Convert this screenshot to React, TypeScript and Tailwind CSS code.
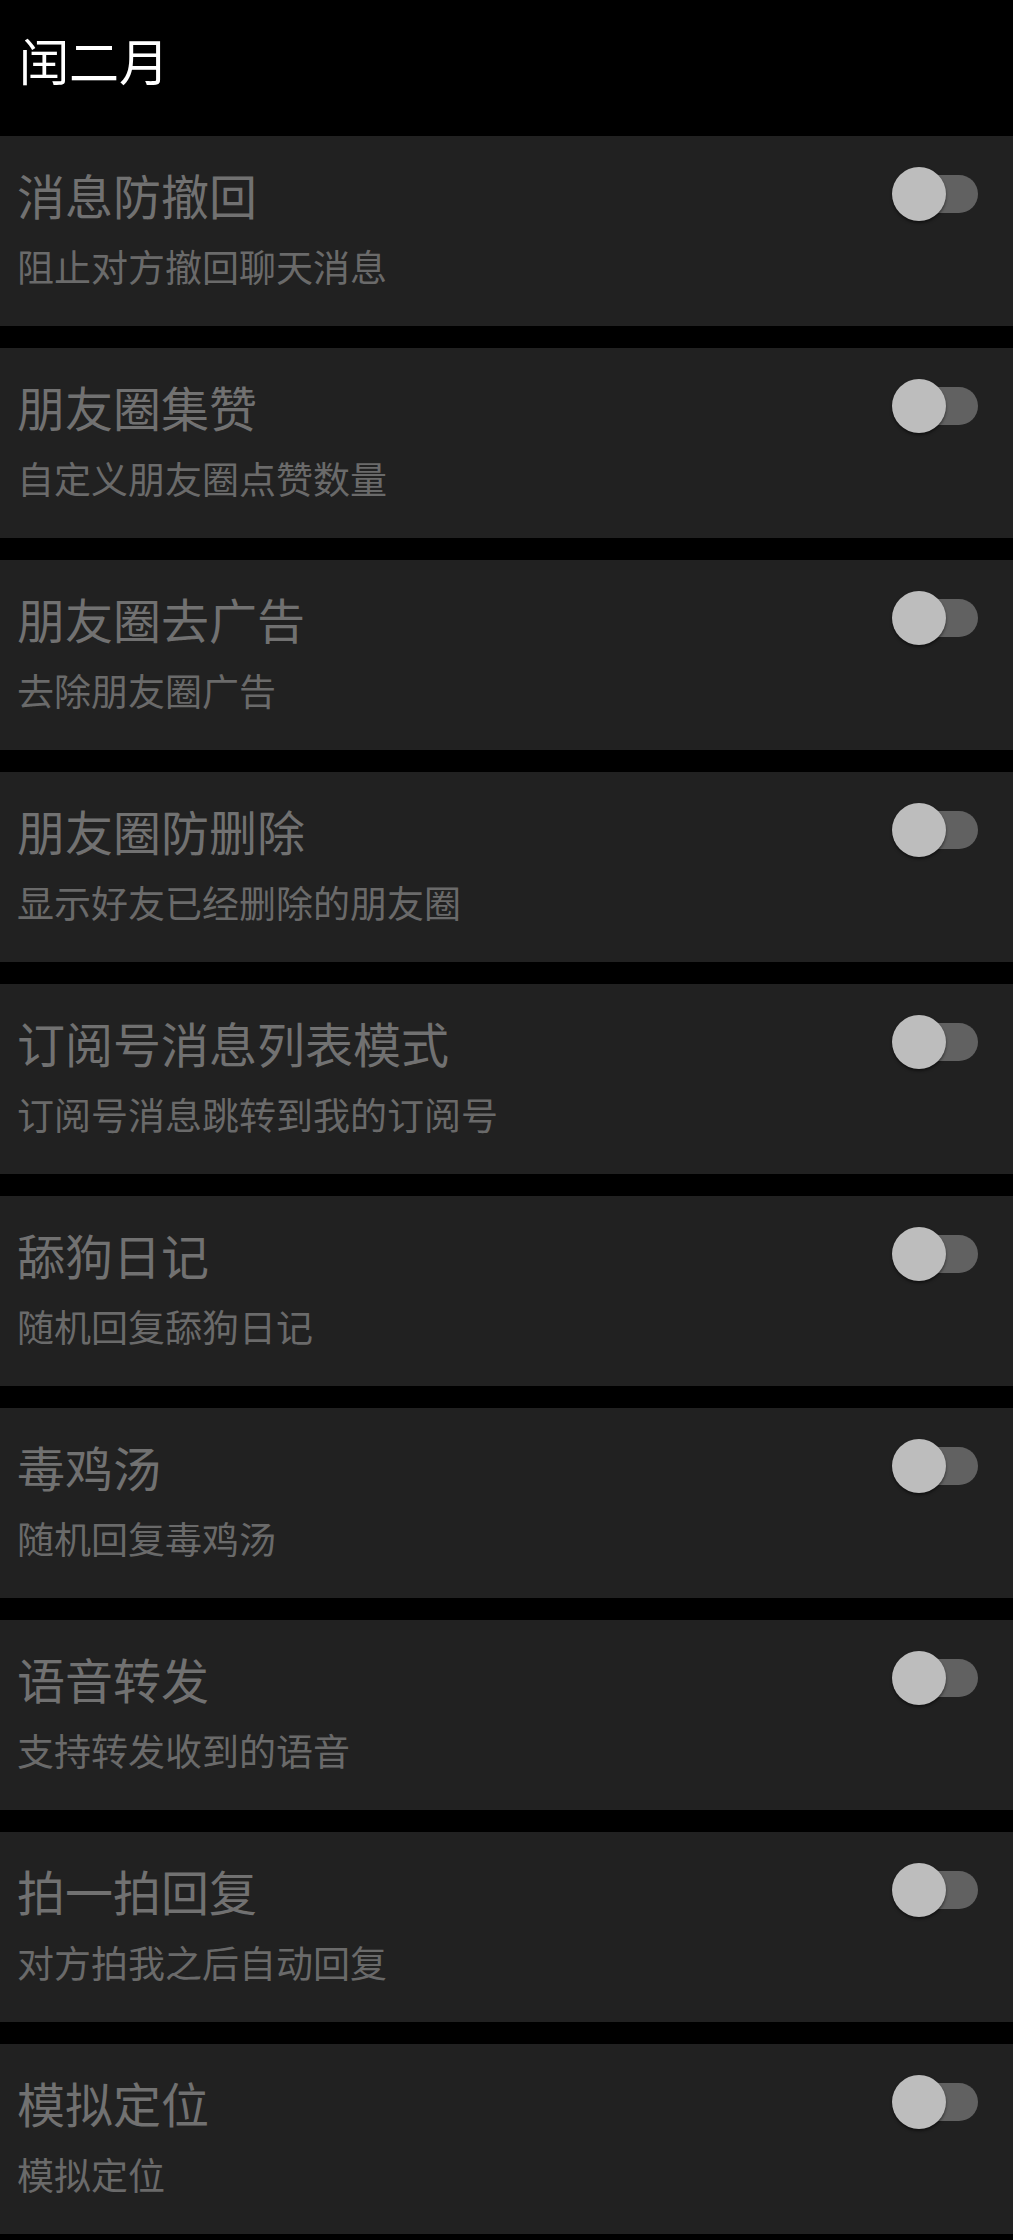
import React from "react";

const items: [string, string][] = [
  ["消息防撤回", "阻止对方撤回聊天消息"],
  ["朋友圈集赞", "自定义朋友圈点赞数量"],
  ["朋友圈去广告", "去除朋友圈广告"],
  ["朋友圈防删除", "显示好友已经删除的朋友圈"],
  ["订阅号消息列表模式", "订阅号消息跳转到我的订阅号"],
  ["舔狗日记", "随机回复舔狗日记"],
  ["毒鸡汤", "随机回复毒鸡汤"],
  ["语音转发", "支持转发收到的语音"],
  ["拍一拍回复", "对方拍我之后自动回复"],
  ["模拟定位", "模拟定位"],
];

function Toggle() {
  return (
    <div className="relative w-[86px] h-[54px] flex items-center">
      <div className="absolute left-[6px] right-0 h-[38px] rounded-full bg-[#616161]" />
      <div className="absolute left-0 w-[54px] h-[54px] rounded-full bg-[#bdbdbd] shadow-[0_2px_3px_rgba(0,0,0,0.5)]" />
    </div>
  );
}

export default function App() {
  return (
    <div
      className="w-[1013px] h-[2240px] bg-black overflow-hidden"
      style={{ fontFamily: '"Noto Sans CJK SC", "Noto Sans", sans-serif' }}
    >
      <div className="h-[136px] px-[19px] flex items-start pt-[24px]">
        <span className="text-white text-[50px] leading-[70px] font-normal">闰二月</span>
      </div>
      <div className="flex flex-col gap-[22px]">
        {items.map(([t, s]) => (
          <div key={t} className="h-[190px] bg-[#212121] flex items-start pl-[17px] pr-[35px]">
            <div className="flex-1 flex flex-col pt-[23px]">
              <div className="text-[48px] leading-[70px] text-[#717171]">{t}</div>
              <div className="text-[37px] leading-[54px] text-[#6a6a6a] mt-[10px]">{s}</div>
            </div>
            <div className="pt-[31px]">
              <Toggle />
            </div>
          </div>
        ))}
      </div>
    </div>
  );
}
